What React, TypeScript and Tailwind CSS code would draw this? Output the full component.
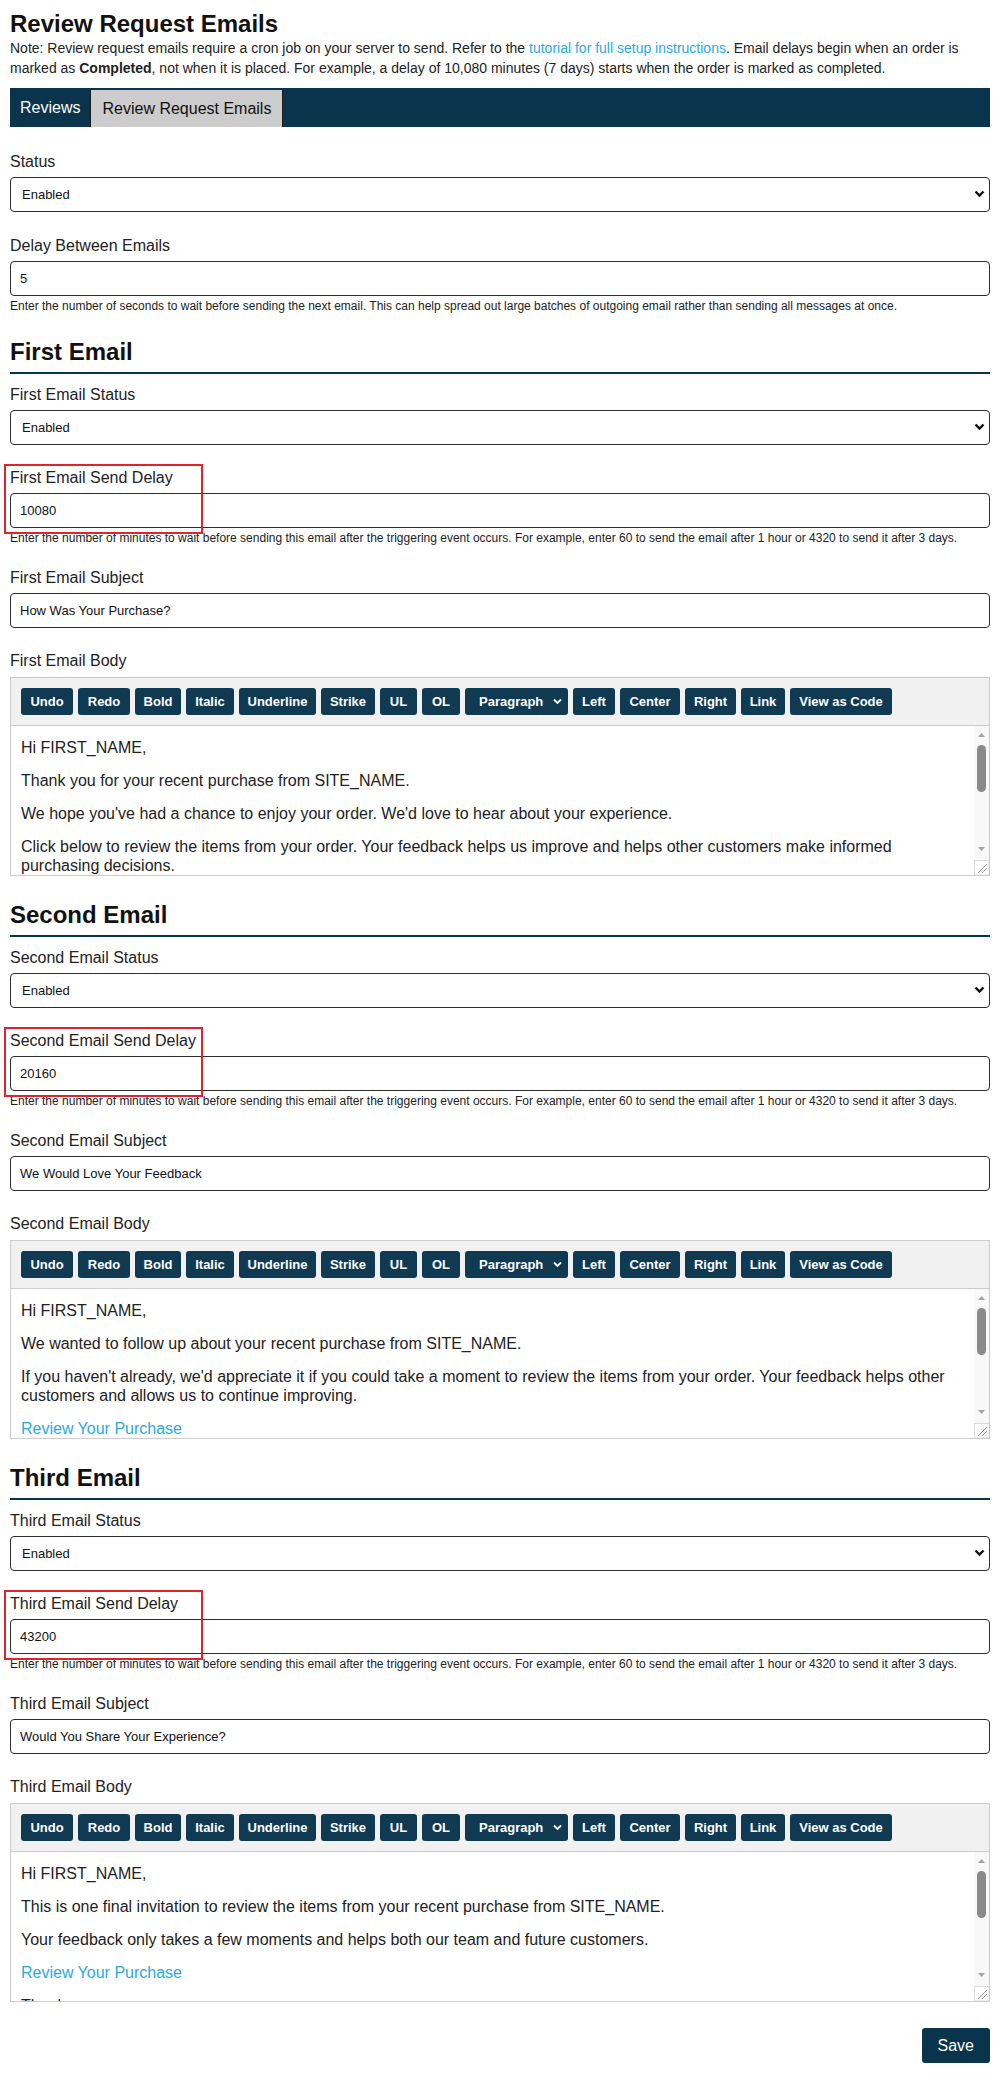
import React from 'react'

type Block = { kind: 'p' | 'link'; text: string }

const TOOLBAR = [
  { label: 'Undo', w: 'w-[52px]' },
  { label: 'Redo', w: 'w-[52px]' },
  { label: 'Bold', w: 'w-[46px]' },
  { label: 'Italic', w: 'w-[48px]' },
  { label: 'Underline', w: 'w-[77px]' },
  { label: 'Strike', w: 'w-[54px]' },
  { label: 'UL', w: 'w-[37px]' },
  { label: 'OL', w: 'w-[38px]' },
]

const TOOLBAR_END = [
  { label: 'Left', w: 'w-[42px]' },
  { label: 'Center', w: 'w-[60px]' },
  { label: 'Right', w: 'w-[51px]' },
  { label: 'Link', w: 'w-[44px]' },
  { label: 'View as Code', w: 'w-[102px]' },
]

const DELAY_HELP =
  'Enter the number of minutes to wait before sending this email after the triggering event occurs. For example, enter 60 to send the email after 1 hour or 4320 to send it after 3 days.'

const EMAILS: { name: string; delay: string; subject: string; body: Block[] }[] = [
  {
    name: 'First',
    delay: '10080',
    subject: 'How Was Your Purchase?',
    body: [
      { kind: 'p', text: 'Hi FIRST_NAME,' },
      { kind: 'p', text: 'Thank you for your recent purchase from SITE_NAME.' },
      { kind: 'p', text: "We hope you've had a chance to enjoy your order. We'd love to hear about your experience." },
      { kind: 'p', text: 'Click below to review the items from your order. Your feedback helps us improve and helps other customers make informed purchasing decisions.' },
      { kind: 'link', text: 'Review Your Purchase' },
    ],
  },
  {
    name: 'Second',
    delay: '20160',
    subject: 'We Would Love Your Feedback',
    body: [
      { kind: 'p', text: 'Hi FIRST_NAME,' },
      { kind: 'p', text: 'We wanted to follow up about your recent purchase from SITE_NAME.' },
      { kind: 'p', text: "If you haven't already, we'd appreciate it if you could take a moment to review the items from your order. Your feedback helps other customers and allows us to continue improving." },
      { kind: 'link', text: 'Review Your Purchase' },
      { kind: 'p', text: 'Thank you,' },
    ],
  },
  {
    name: 'Third',
    delay: '43200',
    subject: 'Would You Share Your Experience?',
    body: [
      { kind: 'p', text: 'Hi FIRST_NAME,' },
      { kind: 'p', text: 'This is one final invitation to review the items from your recent purchase from SITE_NAME.' },
      { kind: 'p', text: 'Your feedback only takes a few moments and helps both our team and future customers.' },
      { kind: 'link', text: 'Review Your Purchase' },
      { kind: 'p', text: 'Thank you,' },
    ],
  },
]

export default function App() {
  return (
    <div className="w-full bg-white px-[10px] pt-[10px] pb-[38px] text-[#222] font-['Liberation_Sans',Arial,Helvetica,sans-serif]">
      <h1 className="text-[24px] font-bold leading-[28px] text-[#111]">Review Request Emails</h1>
      <p className="text-[14px] leading-[20px] text-[#222]">
        Note: Review request emails require a cron job on your server to send. Refer to the{' '}
        <a href="#" className="text-[#29abe2]">tutorial for full setup instructions</a>. Email delays begin when an order is
        marked as <b>Completed</b>, not when it is placed. For example, a delay of 10,080 minutes (7 days) starts when the order is marked as completed.
      </p>

      {/* Tabs */}
      <nav className="mt-[10px] h-[39px] bg-[#0a344c] flex items-stretch">
        <a href="#" className="flex items-center px-[10px] text-[16px] text-white">Reviews</a>
        <a href="#" className="mt-[2px] flex items-center px-[11px] text-[16px] text-[#111] bg-[#cccccc] border-x border-[#1a1a1a]">
          Review Request Emails
        </a>
      </nav>

      <div className="mt-[26px]">
        <Label>Status</Label>
        <Select value="Enabled" />
      </div>

      <div className="mt-[25px]">
        <Label>Delay Between Emails</Label>
        <Input value="5" />
        <Help>Enter the number of seconds to wait before sending the next email. This can help spread out large batches of outgoing email rather than sending all messages at once.</Help>
      </div>

      {EMAILS.map(e => (
        <section key={e.name} className="mt-[25px]">
          <h2 className="text-[24px] font-bold leading-[28px] text-[#111] pb-[6px] border-b-2 border-[#0a344c]">
            {e.name} Email
          </h2>

          <div className="mt-[12px]">
            <Label>{e.name} Email Status</Label>
            <Select value="Enabled" />
          </div>

          <div className="mt-[24px] relative">
            <Label>{e.name} Email Send Delay</Label>
            <Input value={e.delay} />
            <Help>{DELAY_HELP}</Help>
            {/* highlight box */}
            <div className="absolute -left-[6px] -top-[5px] w-[199px] h-[70px] border-2 border-[#e0242b] pointer-events-none" />
          </div>

          <div className="mt-[24px]">
            <Label>{e.name} Email Subject</Label>
            <Input value={e.subject} />
          </div>

          <div className="mt-[24px]">
            <p className="text-[16px] leading-[18px] mb-[7px]">{e.name} Email Body</p>
            <Editor body={e.body} />
          </div>
        </section>
      ))}

      <div className="mt-[26px] flex justify-end">
        <button type="button" className="h-[35px] px-[16px] rounded-[3px] bg-[#0a344c] text-white text-[16px]">
          Save
        </button>
      </div>
    </div>
  )
}

function Label({ children }: { children: React.ReactNode }) {
  return <p className="text-[16px] leading-[18px] mb-[6px] text-[#222]">{children}</p>
}

function Help({ children }: { children: React.ReactNode }) {
  return <p className="mt-[4px] text-[12px] leading-[13px] text-[#222]">{children}</p>
}

function Select({ value }: { value: string }) {
  return (
    <div className="relative">
      <select
        defaultValue={value}
        className="appearance-none block w-full h-[35px] rounded-[4px] border border-[#2e2e2e] bg-white pl-[11px] text-[13px] text-[#111] font-['Liberation_Sans',Arial,sans-serif] outline-none"
      >
        <option>Enabled</option>
        <option>Disabled</option>
      </select>
      <svg className="absolute right-[5px] top-[13px] pointer-events-none" width="11" height="8" viewBox="0 0 11 8">
        <polyline points="1.5,1.5 5.5,5.5 9.5,1.5" fill="none" stroke="#111" strokeWidth="2.4" />
      </svg>
    </div>
  )
}

function Input({ value }: { value: string }) {
  return (
    <input
      readOnly
      value={value}
      className="block w-full h-[35px] rounded-[4px] border border-[#2e2e2e] bg-white pl-[9px] text-[13px] text-[#111] font-['Liberation_Sans',Arial,sans-serif] outline-none"
    />
  )
}

function ToolButton({ label, w }: { label: string; w: string }) {
  return (
    <button type="button" className={`${w} h-[27px] rounded-[3px] bg-[#0f3a52] text-white text-[13px] font-bold flex items-center justify-center whitespace-nowrap`}>
      {label}
    </button>
  )
}

function Editor({ body }: { body: Block[] }) {
  return (
    <div className="border border-[#cccccc]">
      <div className="bg-[#f1f1f1] border-b border-[#cccccc] p-[10px] flex gap-[5px]">
        {TOOLBAR.map(b => <ToolButton key={b.label} {...b} />)}
        <div className="w-[103px] h-[27px] rounded-[3px] bg-[#0f3a52] text-white text-[13px] font-bold flex items-center justify-between pl-[14px] pr-[6px]">
          <span>Paragraph</span>
          <svg width="9" height="7" viewBox="0 0 9 7">
            <polyline points="1,1.5 4.5,5 8,1.5" fill="none" stroke="#fff" strokeWidth="1.8" />
          </svg>
        </div>
        {TOOLBAR_END.map(b => <ToolButton key={b.label} {...b} />)}
      </div>
      <div className="flex h-[149px] overflow-hidden bg-white">
        <div className="flex-1 min-w-0 pt-[12px] px-[10px] text-[16px] leading-[19px] text-[#222]">
          {body.map((b, i) =>
            b.kind === 'link'
              ? <p key={i} className="mb-[14px]"><a href="#" className="text-[#29abe2]">{b.text}</a></p>
              : <p key={i} className="mb-[14px]">{b.text}</p>
          )}
        </div>
        <Scrollbar />
      </div>
    </div>
  )
}

function Scrollbar() {
  return (
    <svg className="shrink-0" width="15" height="149" viewBox="0 0 15 149">
      <rect x="0" y="0" width="15" height="149" fill="#f8f8f8" />
      <polygon points="4,11 7.5,7 11,11" fill="#a3a3a3" />
      <rect x="3" y="19" width="9" height="47" rx="4.5" fill="#8a8a8a" />
      <polygon points="4,121 7.5,125 11,121" fill="#a3a3a3" />
      <rect x="0.5" y="134.5" width="14.5" height="14.5" fill="#ffffff" stroke="#dcdcdc" />
      <line x1="13" y1="138" x2="4" y2="147" stroke="#9a9a9a" strokeWidth="1" />
      <line x1="13" y1="142" x2="8" y2="147" stroke="#9a9a9a" strokeWidth="1" />
    </svg>
  )
}
